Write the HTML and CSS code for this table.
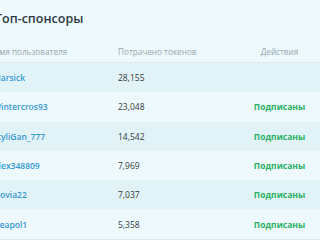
FILE: index.html
```html
<!DOCTYPE html>
<html lang="ru">
<head>
<meta charset="utf-8">
<link rel="stylesheet" href="styles.css">
</head>
<body>
<div class="page">
  <h2 class="title">Топ-спонсоры</h2>
  <div class="table">
    <div class="row head">
      <div class="c1">Имя пользователя</div>
      <div class="c2">Потрачено токенов</div>
      <div class="c3">Действия</div>
    </div>
    <div class="row odd">
      <div class="c1 user">Marsick</div>
      <div class="c2 num">28,155</div>
      <div class="c3"></div>
    </div>
    <div class="row">
      <div class="c1 user">Wintercros93</div>
      <div class="c2 num">23,048</div>
      <div class="c3 sub">Подписаны</div>
    </div>
    <div class="row odd">
      <div class="c1 user">StyliGan_777</div>
      <div class="c2 num">14,542</div>
      <div class="c3 sub">Подписаны</div>
    </div>
    <div class="row">
      <div class="c1 user">Alex348809</div>
      <div class="c2 num">7,969</div>
      <div class="c3 sub">Подписаны</div>
    </div>
    <div class="row odd">
      <div class="c1 user">Slovia22</div>
      <div class="c2 num">7,037</div>
      <div class="c3 sub">Подписаны</div>
    </div>
    <div class="row">
      <div class="c1 user">Neapol1</div>
      <div class="c2 num">5,358</div>
      <div class="c3 sub">Подписаны</div>
    </div>
  </div>
</div>
</body>
</html>
```
FILE: styles.css
```css
html, body {
  margin: 0;
  padding: 0;
  background: #eef9fd;
  font-family: "Open Sans", "Noto Sans", sans-serif;
  overflow: hidden;
}
.page {
  margin-left: -12px;
  width: 332px;
}
.title {
  margin: 0;
  padding: 9px 0 0 7px;
  height: 31px;
  box-sizing: border-box;
  font-size: 12.5px;
  font-weight: 600;
  color: #2c3a42;
  line-height: 20px;
}
.row {
  display: grid;
  grid-template-columns: 130px 121px 81px;
  align-items: center;
  height: 29.3px;
  font-size: 8.5px;
}
.row.head {
  height: 22px;
  margin-top: 9px;
  border-bottom: 1px solid #dbeaee;
  color: #97a7ae;
  font-size: 8.2px;
}
.row.odd {
  background: #e2f3f7;
}
.c1 {
  padding-left: 5px;
}
.c3 {
  text-align: center;
}
.user {
  color: #3598d3;
  font-weight: 600;
}
.num {
  color: #33393d;
}
.sub {
  color: #2bb165;
  font-weight: 700;
}
.table {
  border-bottom: 1px solid #dbeaee;
}
```
